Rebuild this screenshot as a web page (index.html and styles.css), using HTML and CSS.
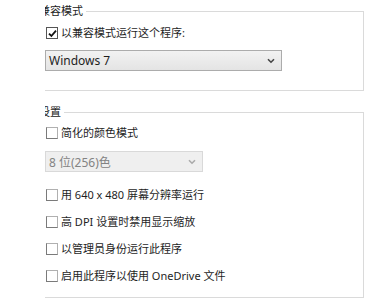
FILE: index.html
```html
<!DOCTYPE html>
<html lang="zh-CN">
<head>
  <meta charset="UTF-8">
  <title>兼容性</title>
  <link rel="stylesheet" href="styles.css">
</head>
<body>
  <div class="page">
    <!-- 兼容模式 -->
    <div class="group first">
      <div class="group-head">
        <span class="title">兼容模式</span>
        <span class="line"></span>
      </div>
      <div class="group-body">
        <label class="check-row">
          <span class="box checked">
            <svg width="9" height="9" viewBox="0 0 9 9"><path d="M1 4.6 L3.4 7 L8 1.6" fill="none" stroke="#111" stroke-width="1.8"/></svg>
          </span>
          以兼容模式运行这个程序:
        </label>
        <div class="dropdown wide">
          <span>Windows 7</span>
          <svg class="chev" width="8" height="6" viewBox="0 0 8 6"><path d="M1 1.2 L4 4.2 L7 1.2" fill="none" stroke="#444" stroke-width="1.6"/></svg>
        </div>
      </div>
    </div>

    <!-- 设置 -->
    <div class="group second">
      <div class="group-head">
        <span class="title">设置</span>
        <span class="line"></span>
      </div>
      <div class="group-body">
        <label class="check-row"><span class="box"></span>简化的颜色模式</label>
        <div class="dropdown narrow disabled">
          <span>8 位(256)色</span>
          <svg class="chev" width="8" height="6" viewBox="0 0 8 6"><path d="M1 1.2 L4 4.2 L7 1.2" fill="none" stroke="#aaa" stroke-width="1.6"/></svg>
        </div>
        <div class="check-list">
          <label class="check-row"><span class="box"></span>用 640 x 480 屏幕分辨率运行</label>
          <label class="check-row"><span class="box"></span>高 DPI 设置时禁用显示缩放</label>
          <label class="check-row"><span class="box"></span>以管理员身份运行此程序</label>
          <label class="check-row"><span class="box"></span>启用此程序以使用 OneDrive 文件</label>
        </div>
      </div>
    </div>
  </div>
</body>
</html>
```

FILE: styles.css
```css
body {
  margin: 0;
  background: #fff;
  font-family: "Noto Sans", "Noto Sans CJK SC", sans-serif;
  font-size: 11px;
  color: #1e1e1e;
}
.page {
  padding: 4px 0 0 45px;
  width: 319px;
}
.group-head {
  display: flex;
  height: 14px;
  line-height: 14px;
}
.title {
  display: inline-block;
  overflow: hidden;
  white-space: nowrap;
  text-indent: -6px;
  padding-right: 3px;
  color: #222;
}
.line {
  flex: 1;
  margin-top: 7px;
  border-top: 1px solid #dadada;
  border-right: 1px solid #dadada;
}
.group-body {
  border-right: 1px solid #dadada;
  border-bottom: 1px solid #dadada;
}
.first .group-body {
  padding: 7px 0 19px 0;
}
.second {
  margin-top: 14px;
}
.second .group-body {
  padding: 6px 0 13px 0;
}
.check-row {
  display: flex;
  align-items: center;
  height: 16px;
  line-height: 16px;
  white-space: nowrap;
}
.box {
  width: 10px;
  height: 10px;
  margin: 0 3px 0 1px;
  border: 1px solid #7a7a7a;
  border-top-color: #b0b0b0;
  border-right-color: #b0b0b0;
  background: #fff;
  display: flex;
  align-items: center;
  justify-content: center;
  flex-shrink: 0;
}
.box.checked {
  border-color: #555;
}
.dropdown {
  display: flex;
  align-items: center;
  justify-content: space-between;
  height: 21px;
  box-sizing: border-box;
  padding: 0 6px 0 3px;
  border: 1px solid #acacac;
  background: linear-gradient(#f2f2f2, #e4e4e4);
  font-size: 12px;
}
.first .dropdown {
  margin-top: 9px;
}
.wide {
  width: 237px;
}
.narrow {
  width: 158px;
  margin-top: 10px;
}
.dropdown.disabled {
  border-color: #d9d9d9;
  background: #efefef;
  color: #838383;
}
.check-list {
  margin-top: 15px;
  display: flex;
  flex-direction: column;
  gap: 11px;
}
```
